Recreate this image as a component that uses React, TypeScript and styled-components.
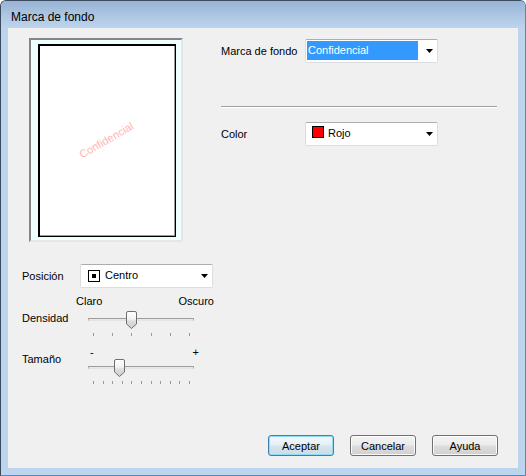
import React from 'react'
import styled, { createGlobalStyle } from 'styled-components'

const GlobalStyle = createGlobalStyle`
  html, body {
    margin: 0;
    padding: 0;
    background: #ffffff;
  }
  body {
    font-family: 'Liberation Sans', Arial, sans-serif;
    font-size: 11px;
    color: #000;
  }
`

const Window = styled.div`
  width: 526px;
  height: 476px;
  box-sizing: border-box;
  display: flex;
  flex-direction: column;
  background: #bcd4ec;
  border: 1px solid #3a4b5e;
  border-right-color: #1f9fcf;
  border-bottom-color: #1f9fcf;
  border-radius: 6px 6px 0 0;
  overflow: hidden;
`

const TitleBar = styled.div`
  flex: none;
  height: 27px;
  box-sizing: border-box;
  padding: 9px 0 0 10px;
  font-size: 12px;
  line-height: 14px;
  color: #000;
  background: linear-gradient(#98b3d4, #b3cce7 70%, #bcd4ec);
`

const Client = styled.div`
  flex: 1;
  margin: 0 7px 7px;
  background: #f0f0f0;
  display: flex;
  flex-direction: column;
  padding: 10px 20px 12px 14px;
`

const Columns = styled.div`
  display: flex;
  gap: 7px;
`

const LeftCol = styled.div`
  width: 192px;
  display: flex;
  flex-direction: column;
`

const RightCol = styled.div`
  width: 276px;
  display: flex;
  flex-direction: column;
`

const PreviewBox = styled.div`
  margin-left: 7px;
  width: 154px;
  height: 204px;
  box-sizing: border-box;
  border: 2px solid;
  border-color: #858585 #e6e6e6 #e6e6e6 #858585;
  background: #f0ffff;
  padding: 4px 5px 3px 7px;
  display: flex;
`

const Page = styled.div`
  flex: 1;
  background: #fff;
  border: 1px solid #000;
  box-shadow: inset 1px 1px 0 #000, inset -1px -1px 0 #9a9a9a;
  display: flex;
  align-items: center;
  justify-content: center;
`

const Watermark = styled.span`
  color: #ffb4b4;
  font-size: 11px;
  transform: rotate(-30deg);
  margin: -2px 0 0 -2px;
`

const FieldRow = styled.div<{ $label: number; $top: number }>`
  display: flex;
  align-items: center;
  margin-top: ${p => p.$top}px;

  & > label {
    width: ${p => p.$label}px;
    flex: none;
    line-height: 13px;
  }
`

const Combo = styled.div`
  width: 133px;
  height: 24px;
  box-sizing: border-box;
  display: flex;
  align-items: center;
  padding: 1px 4px 2px 1px;
  background: #fff;
  border: 1px solid #dcdde3;
  border-top-color: #abadb3;
  border-radius: 2px;
`

const ComboText = styled.span<{ $selected?: boolean }>`
  display: flex;
  align-items: center;
  height: 19px;
  line-height: 13px;
  ${p =>
    p.$selected
      ? `
    width: 111px;
    padding-left: 1px;
    box-sizing: border-box;
    background: #3399ff;
    color: #fff;
  `
      : ''}
`

const Spacer = styled.span`
  flex: 1;
`

const Swatch = styled.span`
  width: 12px;
  height: 12px;
  box-sizing: border-box;
  border: 1px solid #000;
  background: #ff0000;
  margin: -3px 4px 0 5px;
`

const PositionIcon = styled.span`
  width: 12px;
  height: 12px;
  box-sizing: border-box;
  border: 1px solid #000;
  background: #fff;
  margin: 0 5px 0 6px;
  display: flex;
  align-items: center;
  justify-content: center;

  &::after {
    content: '';
    width: 4px;
    height: 4px;
    background: #000;
  }
`

const Separator = styled.div`
  margin-top: 43px;
  border-top: 1px solid #a0a0a0;
  border-bottom: 1px solid #ffffff;
`

const EndLabels = styled.div<{ $top: number; $left: number; $right: number }>`
  display: flex;
  justify-content: space-between;
  line-height: 13px;
  margin: ${p => p.$top}px ${p => p.$right}px 0 ${p => p.$left}px;
`

const SliderRow = styled.div<{ $top: number }>`
  display: flex;
  align-items: flex-start;
  margin-top: ${p => p.$top}px;
`

const SliderLabel = styled.span<{ $shift: number }>`
  width: 66px;
  flex: none;
  line-height: 13px;
  margin-top: ${p => p.$shift}px;
`

const SliderBody = styled.div`
  width: 106px;
  display: flex;
  flex-direction: column;
`

const TrackArea = styled.div`
  position: relative;
  height: 18px;
  box-sizing: border-box;
  padding-top: 7px;
`

const Groove = styled.div`
  height: 1px;
  border: 1px solid #b0b0b0;
  border-top-color: #9c9c9c;
  border-bottom-color: #e4e4e4;
  background: #e8e8e8;
`

const Thumb = styled.svg`
  position: absolute;
  top: 0;
`

const Ticks = styled.div`
  display: flex;
  justify-content: space-between;
  padding: 0 4px 0 5px;
  margin-top: 4px;

  & > i {
    width: 1px;
    height: 3px;
    background: #9a9a9a;
  }
`

const ButtonBar = styled.div`
  margin-top: auto;
  display: flex;
  justify-content: flex-end;
  gap: 16px;
`

const Button = styled.button<{ $default?: boolean }>`
  width: 66px;
  height: 21px;
  box-sizing: border-box;
  padding: 0;
  font: 11px 'Liberation Sans', Arial, sans-serif;
  color: #000;
  border-radius: 3px;
  border: 1px solid ${p => (p.$default ? '#3c7fb1' : '#707070')};
  background: ${p =>
    p.$default
      ? 'linear-gradient(#f2f8fc 0%, #e6eff5 48%, #d6e4ee 52%, #cddce7 100%)'
      : 'linear-gradient(#f4f4f4 0%, #ebebeb 48%, #dddddd 52%, #d0d0d0 100%)'};
  box-shadow: inset 0 0 0 1px ${p => (p.$default ? '#8fdcf7' : 'rgba(255,255,255,0.85)')};
`

const Arrow = () => (
  <svg width="7" height="4" viewBox="0 0 7 4">
    <polygon points="0,0 7,0 3.5,4" fill="#000" />
  </svg>
)

const Slider = ({ ticks, value }: { ticks: number; value: number }) => {
  const left = 5 + value * 97 - 5.5
  return (
    <SliderBody>
      <TrackArea>
        <Groove />
        <Thumb width="11" height="18" viewBox="0 0 11 18" style={{ left }}>
          <defs>
            <linearGradient id="thumbFill" x1="0" y1="0" x2="0" y2="1">
              <stop offset="0" stopColor="#ffffff" />
              <stop offset="0.45" stopColor="#f2f2f2" />
              <stop offset="0.55" stopColor="#dedede" />
              <stop offset="1" stopColor="#cfcfcf" />
            </linearGradient>
          </defs>
          <path
            d="M0.5,2 Q0.5,0.5 2,0.5 H9 Q10.5,0.5 10.5,2 V13 L5.5,17.5 L0.5,13 Z"
            fill="url(#thumbFill)"
            stroke="#6f6f6f"
          />
        </Thumb>
      </TrackArea>
      <Ticks>
        {Array.from({ length: ticks }).map((_, i) => (
          <i key={i} />
        ))}
      </Ticks>
    </SliderBody>
  )
}

export default function App() {
  return (
    <>
      <GlobalStyle />
      <Window>
        <TitleBar>Marca de fondo</TitleBar>
        <Client>
          <Columns>
            <LeftCol>
              <PreviewBox>
                <Page>
                  <Watermark>Confidencial</Watermark>
                </Page>
              </PreviewBox>

              <FieldRow $label={58} $top={22}>
                <label>Posición</label>
                <Combo>
                  <PositionIcon />
                  <ComboText>Centro</ComboText>
                  <Spacer />
                  <Arrow />
                </Combo>
              </FieldRow>

              <EndLabels $top={7} $left={54} $right={0}>
                <span>Claro</span>
                <span>Oscuro</span>
              </EndLabels>
              <SliderRow $top={3}>
                <SliderLabel $shift={1}>Densidad</SliderLabel>
                <Slider ticks={6} value={0.4} />
              </SliderRow>

              <EndLabels $top={10} $left={68} $right={15}>
                <span>-</span>
                <span>+</span>
              </EndLabels>
              <SliderRow $top={0}>
                <SliderLabel $shift={-6}>Tamaño</SliderLabel>
                <Slider ticks={11} value={0.27} />
              </SliderRow>
            </LeftCol>

            <RightCol>
              <FieldRow $label={84} $top={1}>
                <label>Marca de fondo</label>
                <Combo>
                  <ComboText $selected>Confidencial</ComboText>
                  <Spacer />
                  <Arrow />
                </Combo>
              </FieldRow>
              <Separator />
              <FieldRow $label={84} $top={14}>
                <label>Color</label>
                <Combo>
                  <Swatch />
                  <ComboText>Rojo</ComboText>
                  <Spacer />
                  <Arrow />
                </Combo>
              </FieldRow>
            </RightCol>
          </Columns>

          <ButtonBar>
            <Button $default>Aceptar</Button>
            <Button>Cancelar</Button>
            <Button>Ayuda</Button>
          </ButtonBar>
        </Client>
      </Window>
    </>
  )
}
